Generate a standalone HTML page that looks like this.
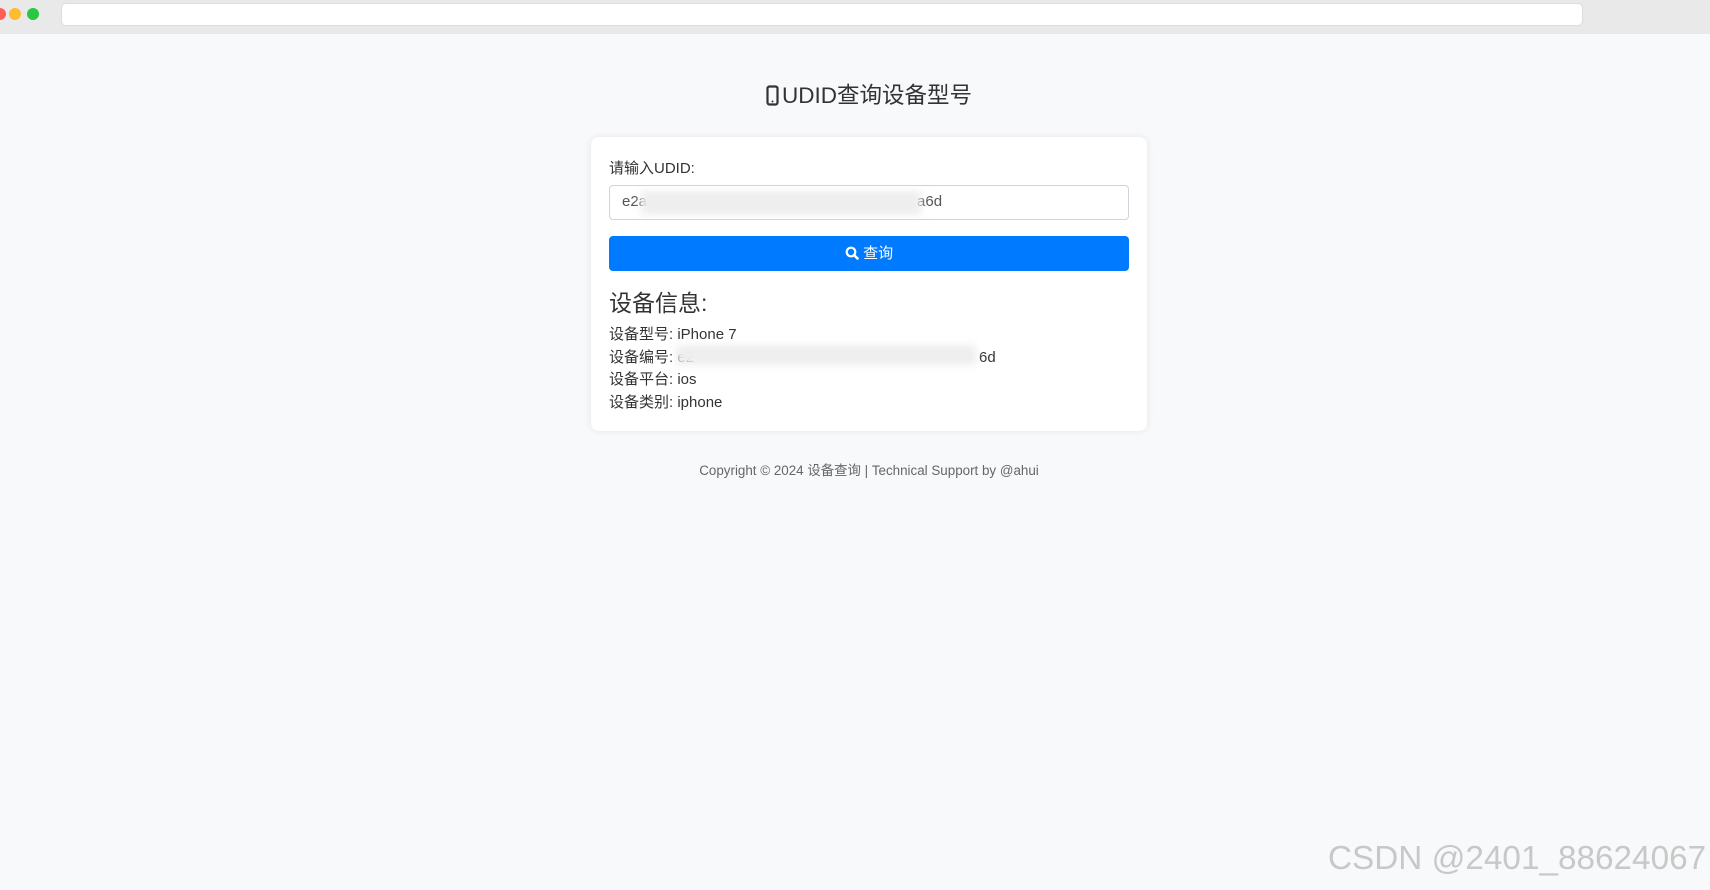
<!DOCTYPE html>
<html><head><meta charset="utf-8"><style>
*{margin:0;padding:0;box-sizing:border-box}
body{width:1710px;height:890px;background:#f8f9fa;font-family:"Liberation Sans","Noto Sans CJK SC",sans-serif;color:#212529;position:relative;overflow:hidden}
.top{position:absolute;left:0;top:0;width:1710px;height:34px;background:#e9e9e9}
.dot{position:absolute;top:8px;width:12px;height:12px;border-radius:50%}
.addr{position:absolute;left:61px;top:3px;width:1522px;height:23px;background:#fff;border-radius:5px;border:1px solid #ddd}
h1{position:absolute;left:0;width:1738px;top:78px;text-align:center;font-size:22.5px;font-weight:400;color:#333}
.card{position:absolute;left:591px;top:137px;width:556px;height:294px;background:#fff;border-radius:8px;box-shadow:0 0 8px rgba(0,0,0,.08)}
.lbl{position:absolute;left:18px;top:20px;font-size:15px;color:#333}
.inp{position:absolute;left:18px;top:48px;width:520px;height:35px;border:1px solid #ced4da;border-radius:4px;font-size:15px;color:#555;padding:7px 12px}
.btn{position:absolute;left:18px;top:99px;width:520px;height:35px;background:#007bff;border-radius:4px;color:#fff;font-size:15px;text-align:center;line-height:35px}
.h2{position:absolute;left:18px;top:147px;font-size:23px;color:#333}
.info{position:absolute;left:18px;top:187px;font-size:15px;line-height:22.5px;color:#333}
.blur{position:absolute;background:#eee;filter:blur(4px)}
.foot{position:absolute;left:0;width:1738px;top:459px;text-align:center;font-size:13.4px;color:#666}
.wm{position:absolute;left:1328px;top:840px;font-size:33.3px;color:#c8c8c8;white-space:nowrap}
</style></head><body>
<div class="top"><div class="dot" style="left:-6px;background:#ff5f57"></div><div class="dot" style="left:9px;background:#febc2e"></div><div class="dot" style="left:27px;background:#28c840"></div><div class="addr"></div></div>
<h1><svg width="13" height="21" viewBox="0 0 13 21" style="vertical-align:-3px;margin-right:3px"><rect x="1.5" y="1.5" width="10" height="18" rx="2" fill="none" stroke="#333" stroke-width="2.2"/><circle cx="6.5" cy="16.5" r="1" fill="#333"/></svg>UDID查询设备型号</h1>
<div class="card">
<div class="lbl">请输入UDID:</div>
<div class="inp">e2a<span style="display:inline-block;width:270px"></span>a6d</div>
<div class="blur" style="left:50px;top:54px;width:280px;height:24px"></div>
<div class="btn"><svg width="14" height="14" viewBox="0 0 14 14" style="vertical-align:-2px"><circle cx="6" cy="6" r="4.3" fill="none" stroke="#fff" stroke-width="2.2"/><path d="M9 9l3.5 3.5" stroke="#fff" stroke-width="2.6" stroke-linecap="round"/></svg> 查询</div>
<div class="h2">设备信息:</div>
<div class="info">设备型号: iPhone 7<br>设备编号: e2<span style="display:inline-block;width:285px"></span>6d<br>设备平台: ios<br>设备类别: iphone</div>
<div class="blur" style="left:85px;top:208px;width:300px;height:20px"></div>
</div>
<div class="foot">Copyright © 2024 设备查询 | Technical Support by @ahui</div>
<div class="wm">CSDN @2401_88624067</div>
</body></html>
